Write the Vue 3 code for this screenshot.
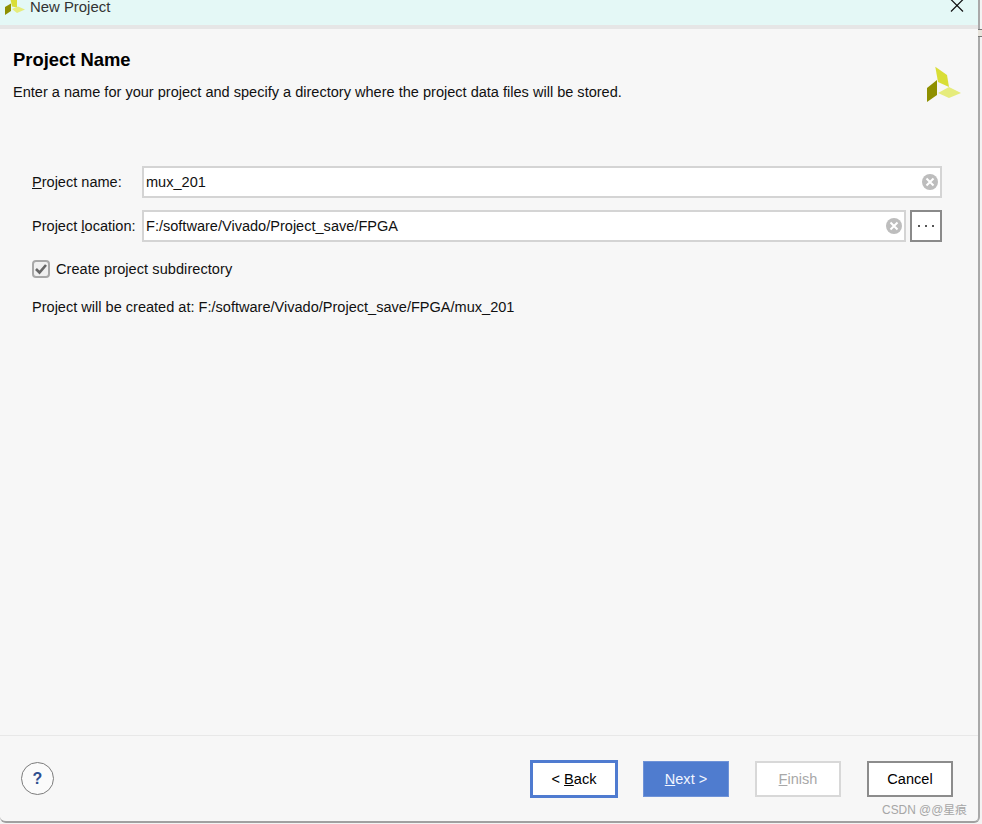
<script setup>
const buttons = [
  { key: 'back', before: '< ', mnemonic: 'B', after: 'ack' },
  { key: 'next', before: '', mnemonic: 'N', after: 'ext >' },
  { key: 'finish', before: '', mnemonic: 'F', after: 'inish' },
  { key: 'cancel', before: '', mnemonic: '', after: 'Cancel' },
]
</script>

<template>
  <div class="screen">
    <div class="window">
      <header class="titlebar">
        <div class="title-left">
          <svg class="title-logo" width="21" height="16" viewBox="0 0 21 16">
            <path d="M6 -3 L13 0 L13 7.5 L8 6.5 Z" fill="#d9de36" />
            <path d="M1 7 L7 3.5 L7 11 L1 15 Z" fill="#8f9000" />
            <path d="M8 9 L14 6.5 L21 9.5 L13 13 Z" fill="#e6ec7c" />
          </svg>
          <span class="title-text">New Project</span>
        </div>
        <svg class="close" width="14" height="14" viewBox="0 0 14 14">
          <path d="M1 0.5 L13 12.5 M13 0.5 L1 12.5" stroke="#111" stroke-width="1.2" fill="none" />
        </svg>
      </header>

      <main class="body">
        <section class="heading">
          <div>
            <h1>Project Name</h1>
            <p>Enter a name for your project and specify a directory where the project data files will be stored.</p>
          </div>
          <svg class="logo" width="36" height="36" viewBox="926 66 36 36">
            <path d="M935.3 66.7 L947 75 L949 87 L938 82 Z" fill="#d9de36" />
            <path d="M937 80 L937 95 L927 102 L927 88 Z" fill="#8f9000" />
            <path d="M949 87 L961 93 L949 98 L938 93 Z" fill="#e6ec7c" />
          </svg>
        </section>

        <section class="form">
          <div class="row">
            <label class="label"><u>P</u>roject name:</label>
            <div class="field">
              <span>mux_201</span>
              <span class="clear"><svg width="16" height="16" viewBox="0 0 16 16"><circle cx="8" cy="8" r="8" fill="#bdbdbd" /><path d="M4.5 4.5 L11.5 11.5 M11.5 4.5 L4.5 11.5" stroke="#fff" stroke-width="2" /></svg></span>
            </div>
          </div>
          <div class="row">
            <label class="label">Project <u>l</u>ocation:</label>
            <div class="field">
              <span>F:/software/Vivado/Project_save/FPGA</span>
              <span class="clear"><svg width="16" height="16" viewBox="0 0 16 16"><circle cx="8" cy="8" r="8" fill="#bdbdbd" /><path d="M4.5 4.5 L11.5 11.5 M11.5 4.5 L4.5 11.5" stroke="#fff" stroke-width="2" /></svg></span>
            </div>
            <div class="browse"><i></i><i></i><i></i></div>
          </div>
          <div class="check-row">
            <span class="checkbox">
              <svg width="14" height="12" viewBox="0 0 14 12"><path d="M2 6 L5.5 9.5 L12 2" stroke="#666" stroke-width="2.6" fill="none" /></svg>
            </span>
            <span class="check-text">Create project subdirectory</span>
          </div>
          <p class="created">Project will be created at: F:/software/Vivado/Project_save/FPGA/mux_201</p>
        </section>
      </main>

      <footer class="footer">
        <div class="help">?</div>
        <div class="actions">
          <button v-for="b in buttons" :key="b.key" class="btn" :class="b.key">{{ b.before }}<u v-if="b.mnemonic">{{ b.mnemonic }}</u>{{ b.after }}</button>
        </div>
      </footer>
    </div>
    <div class="edge-mark"></div>
    <div class="watermark">CSDN @@星痕</div>
  </div>
</template>

<style>
html, body {
  margin: 0;
  background: #fff;
}
</style>

<style scoped>
.screen {
  position: relative;
  width: 982px;
  height: 824px;
  overflow: hidden;
  background: #f3f3f3;
  font-family: "Liberation Sans", Arial, "Noto Sans CJK SC", sans-serif;
  font-size: 14.55px;
  color: #111;
}
.window {
  width: 980px;
  height: 823px;
  box-sizing: border-box;
  display: flex;
  flex-direction: column;
  background: #f7f7f7;
  border-right: 2px solid #a9a9a9;
  border-bottom: 2px solid #a0a0a0;
  border-bottom-right-radius: 6px;
  border-bottom-left-radius: 6px;
}
.titlebar {
  height: 25px;
  flex: none;
  display: flex;
  justify-content: space-between;
  align-items: flex-start;
  background: #e4f8f6;
  border-bottom: 4px solid #e6e6e6;
}
.title-left {
  display: flex;
  align-items: flex-start;
  padding-left: 4px;
}
.title-logo {
  display: block;
}
.title-text {
  margin-left: 5px;
  margin-top: -2px;
  font-size: 14.9px;
  line-height: 18px;
  color: #333;
}
.close {
  margin-top: -1px;
  margin-right: 14px;
}
.body {
  flex: 1;
  padding: 0 35px 0 13px;
}
.heading {
  position: relative;
  display: flex;
  justify-content: space-between;
  height: 137px;
}
.heading h1 {
  margin: 21px 0 0;
  font-size: 18.4px;
  line-height: 20px;
  font-weight: bold;
  color: #000;
}
.heading p {
  margin: 13px 0 0;
  line-height: 18px;
  color: #111;
}
.logo {
  margin-top: 37px;
  margin-right: -19px;
}
.form {
  padding-left: 19px;
  width: 910px;
}
.row {
  display: flex;
  align-items: center;
  height: 32px;
  margin-bottom: 12px;
}
.label {
  width: 110px;
  flex: none;
  white-space: nowrap;
}
.field {
  flex: 1;
  height: 32px;
  box-sizing: border-box;
  display: flex;
  align-items: center;
  justify-content: space-between;
  padding: 0 2px;
  background: #fff;
  border: 2px solid #d4d4d4;
}
.clear {
  display: flex;
}
.browse {
  width: 32px;
  height: 32px;
  box-sizing: border-box;
  margin-left: 4px;
  display: flex;
  align-items: center;
  justify-content: center;
  gap: 5px;
  background: #fff;
  border: 2px solid #8a8a8a;
}
.browse i {
  width: 2px;
  height: 2px;
  background: #555;
}
.check-row {
  display: flex;
  align-items: center;
  gap: 6px;
  height: 20px;
  margin-top: 17px;
}
.check-text {
  letter-spacing: 0.06px;
}
.checkbox {
  width: 18px;
  height: 18px;
  box-sizing: border-box;
  display: flex;
  align-items: center;
  justify-content: center;
  background: #f0f0f0;
  border: 2px solid #a8a8a8;
  border-radius: 4px;
}
.created {
  margin: 18px 0 0;
  line-height: 20px;
}
.footer {
  height: 86px;
  flex: none;
  box-sizing: border-box;
  display: flex;
  justify-content: space-between;
  align-items: flex-start;
  padding: 25px 25px 0 21px;
  border-top: 1px solid #e8e8e8;
}
.help {
  width: 33px;
  height: 33px;
  box-sizing: border-box;
  margin-top: 1px;
  display: flex;
  align-items: center;
  justify-content: center;
  background: #fbfbfb;
  border: 1px solid #7c7c7c;
  border-radius: 50%;
  font-size: 16px;
  font-weight: bold;
  color: #2f4f8f;
}
.actions {
  display: flex;
  gap: 26px;
}
.btn {
  width: 86px;
  height: 36px;
  box-sizing: border-box;
  padding: 0;
  font-family: inherit;
  font-size: 14.55px;
  color: #000;
  background: #fff;
  border: 2px solid #d8d8d8;
}
.back {
  border: 3px solid #4f7bd0;
  width: 88px;
  height: 38px;
  margin-top: -1px;
  margin-right: -1px;
  margin-left: -1px;
}
.next {
  background: #4f7ccf;
  border: 1px solid #6f93d8;
  color: #f2f6ff;
}
.finish {
  color: #a8a8a8;
}
.cancel {
  border: 2px solid #8c8c8c;
}
.edge-mark {
  position: absolute;
  top: 29px;
  right: 0;
  width: 4px;
  height: 6px;
  background: #e8e4dc;
  border-top: 1px solid #777;
  border-bottom: 1px solid #777;
}
.watermark {
  position: absolute;
  right: 15px;
  bottom: 7px;
  font-size: 11.9px;
  color: #a6a6a6;
}
</style>
